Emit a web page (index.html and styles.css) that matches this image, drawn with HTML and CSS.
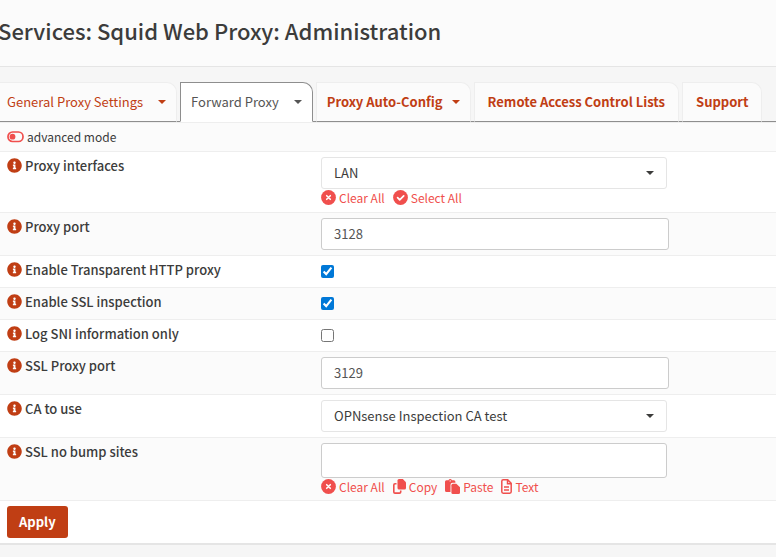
FILE: index.html
```
<!DOCTYPE html>
<html lang="en">
<head>
<meta charset="utf-8">
<meta name="viewport" content="width=device-width, initial-scale=1">
<title>Services: Squid Web Proxy: Administration</title>
<link rel="stylesheet" href="styles.css">
</head>
<body>
<svg class="sprite" aria-hidden="true">
  <symbol id="info" viewBox="0 0 512 512"><path d="M256 8C119.043 8 8 119.083 8 256c0 136.997 111.043 248 248 248s248-111.003 248-248C504 119.083 392.957 8 256 8zm0 110c23.196 0 42 18.804 42 42s-18.804 42-42 42-42-18.804-42-42 18.804-42 42-42zm56 254c0 6.627-5.373 12-12 12h-88c-6.627 0-12-5.373-12-12v-24c0-6.627 5.373-12 12-12h12v-64h-12c-6.627 0-12-5.373-12-12v-24c0-6.627 5.373-12 12-12h64c6.627 0 12 5.373 12 12v100h12c6.627 0 12 5.373 12 12v24z"/></symbol>
  <symbol id="clear" viewBox="0 0 15 15"><circle cx="7.5" cy="7.5" r="7.4"/><path d="M5.700 5.700l3.600 3.600M9.300 5.700L5.700 9.300" fill="none" stroke="#fff" stroke-width="1.600" stroke-linecap="round"/></symbol>
  <symbol id="check" viewBox="0 0 15 15"><circle cx="7.500" cy="7.500" r="7.400"/><path d="M4.600 7.700l2.100 2.100 4-4" fill="none" stroke="#fff" stroke-width="1.700" stroke-linecap="round" stroke-linejoin="round"/></symbol>
  <symbol id="copy" viewBox="0 0 13 15"><path d="M6 0H9.800L13 3.200V9q0 1.500-1.500 1.500H6Q4.500 10.500 4.500 9V1.500Q4.500 0 6 0z"/><path d="M3.500 4.700H2q-1.200 0-1.200 1.200v7q0 1.200 1.200 1.200h4.500q1.200 0 1.200-1.200V11.500" fill="none" stroke="currentColor" stroke-width="1.600"/></symbol>
  <symbol id="paste" viewBox="0 0 15 15"><path d="M1.500 1.200h2Q4 0 5.200 0t1.700 1.200h2q1.500 0 1.500 1.500v1.100H7.500Q5.500 3.800 5.500 5.800V13h-4Q0 13 0 11.500V2.700q0-1.500 1.500-1.500z"/><path d="M7.900 4.700h3.400L15 8.200v5.300q0 1.500-1.500 1.500H7.900q-1.500 0-1.500-1.500V6.200q0-1.500 1.500-1.500z"/><circle cx="5.200" cy="1.900" r=".7" fill="#fbfbfb"/></symbol>
  <symbol id="text" viewBox="0 0 11 15"><path d="M2.200.8h4.500l3.500 3.500v8.500q0 1.400-1.400 1.400H2.200Q.8 14.200.8 12.800V2.200Q.8.8 2.200.8zM6.500 1v3.700H10M3 8h5M3 11h5" fill="none" stroke="currentColor" stroke-width="1.500"/></symbol>
  <symbol id="toggle" viewBox="0 0 17 12"><rect x="1" y="1" width="15" height="9.500" rx="4.500" fill="none" stroke="currentColor" stroke-width="1.700"/><circle cx="5.500" cy="5.700" r="2.900"/></symbol>
</svg>

<header class="page-head"><h1>Services: Squid Web Proxy: Administration</h1></header>

<main>
  <nav class="tabs" aria-label="Proxy settings">
    <a class="tab" href="#general">General Proxy Settings<span class="caret"></span></a>
    <a class="tab active" href="#forward" aria-current="page">Forward Proxy<span class="caret"></span></a>
    <a class="tab strong" href="#pac">Proxy Auto-Config<span class="caret"></span></a>
    <a class="tab strong plain" href="#acl">Remote Access Control Lists</a>
    <a class="tab strong plain" href="#support">Support</a>
  </nav>

  <form class="settings">
    <div class="mode"><a href="#advanced" aria-label="Toggle advanced mode"><svg class="toggle"><use href="#toggle"/></svg></a><span>advanced mode</span></div>

    <div class="row">
      <label for="interfaces"><svg class="icon"><use href="#info"/></svg>Proxy interfaces</label>
      <div class="field">
        <select id="interfaces"><option>LAN</option></select>
        <div class="actions">
          <a href="#clear"><svg class="icon"><use href="#clear"/></svg>Clear All</a>
          <a href="#select"><svg class="icon"><use href="#check"/></svg>Select All</a>
        </div>
      </div>
    </div>
    <div class="row">
      <label for="port"><svg class="icon"><use href="#info"/></svg>Proxy port</label>
      <div class="field"><input class="text" id="port" type="text" value="3128"></div>
    </div>
    <div class="row">
      <label for="transparent"><svg class="icon"><use href="#info"/></svg>Enable Transparent HTTP proxy</label>
      <div class="field"><input class="check" id="transparent" type="checkbox" checked></div>
    </div>
    <div class="row">
      <label for="ssl"><svg class="icon"><use href="#info"/></svg>Enable SSL inspection</label>
      <div class="field"><input class="check" id="ssl" type="checkbox" checked></div>
    </div>
    <div class="row">
      <label for="sni"><svg class="icon"><use href="#info"/></svg>Log SNI information only</label>
      <div class="field"><input class="check" id="sni" type="checkbox"></div>
    </div>
    <div class="row">
      <label for="sslport"><svg class="icon"><use href="#info"/></svg>SSL Proxy port</label>
      <div class="field"><input class="text" id="sslport" type="text" value="3129"></div>
    </div>
    <div class="row">
      <label for="ca"><svg class="icon"><use href="#info"/></svg>CA to use</label>
      <div class="field"><select id="ca"><option>OPNsense Inspection CA test</option></select></div>
    </div>
    <div class="row">
      <label for="nobump"><svg class="icon"><use href="#info"/></svg>SSL no bump sites</label>
      <div class="field">
        <input class="text tokens" id="nobump" type="text">
        <div class="actions">
          <a href="#clear"><svg class="icon"><use href="#clear"/></svg>Clear All</a>
          <a href="#copy"><svg class="icon copy"><use href="#copy"/></svg>Copy</a>
          <a href="#paste"><svg class="icon"><use href="#paste"/></svg>Paste</a>
          <a href="#text"><svg class="icon file"><use href="#text"/></svg>Text</a>
        </div>
      </div>
    </div>
    <div class="row submit"><button type="button">Apply</button></div>
  </form>
</main>
</body>
</html>
```
FILE: styles.css
```
* {
  box-sizing: border-box;
}

body {
  margin: 0;
  overflow-x: hidden;
  background: #f6f6f6;
  color: #3c3c3b;
  font: 13px/20px "Noto Sans CJK SC", "Noto Sans", sans-serif;
}

.sprite {
  display: none;
}

a {
  color: #f04f4d;
  text-decoration: none;
}

svg {
  flex: none;
  fill: currentColor;
}

.page-head {
  padding: 13px 0 19px;
  border-bottom: 1px solid #e5e5e5;
  background: #fbfbfb;
}

h1 {
  margin: 0 0 0 -2px;
  font-size: 22px;
  font-weight: 500;
  line-height: 34px;
}

.tabs {
  display: flex;
  gap: 3px;
  margin-left: -4px;
  padding-top: 15px;
  border-bottom: 1px solid #8e8e8e;
}

.tab {
  display: flex;
  align-items: center;
  height: 40px;
  margin-bottom: -1px;
  padding: 0 10px;
  border: 1px solid #eee;
  border-bottom-color: #8e8e8e;
  border-radius: 0 10px 0 0;
  background: #fbfbfb;
  color: #c03e14;
  white-space: nowrap;
}

.tab.active {
  border-color: #8e8e8e;
  border-bottom-color: #fff;
  background: #fff;
  color: #555;
}

.tab.strong {
  font-weight: 700;
}

.tab.plain {
  padding: 0 13px;
}

.caret {
  margin-left: 15px;
  border: 4px solid transparent;
  border-top-color: currentColor;
  border-bottom: 0;
}

.strong .caret {
  margin-left: 9px;
}

.settings {
  border-top: 1px solid #eee;
  border-bottom: 2px solid #e5e5e5;
}

.mode {
  display: flex;
  align-items: center;
  gap: 3px;
  height: 28px;
  padding: 0 7px;
  background: #fbfbfb;
  font-size: 12px;
}

.mode a {
  display: flex;
}

.toggle {
  width: 17px;
  height: 12px;
  margin-bottom: 1px;
}

.row {
  display: grid;
  grid-template-columns: 314px minmax(0, 348px);
  padding: 5px 7px;
  border-top: 1px solid #eee;
  background: #fff;
}

.row:nth-child(odd) {
  background: #fbfbfb;
}

.row.submit {
  display: block;
  background: #fff;
}

.row label {
  display: flex;
  align-items: center;
  align-self: start;
  gap: 3px;
  height: 18px;
  font-weight: 500;
}

.icon {
  width: 15px;
  height: 15px;
  margin-bottom: 1px;
}

label .icon {
  margin-bottom: 2px;
  color: #c03e14;
}

.icon.copy {
  width: 13px;
}

.icon.file {
  width: 11px;
}

select,
.text {
  display: block;
  width: 100%;
  height: 32px;
  padding: 0 12px;
  border: 1px solid #ccc;
  border-radius: 3px;
  background: #fff;
  color: #555;
  font: inherit;
}

.text {
  padding-bottom: 2px;
}

select,
.tokens {
  max-width: 346px;
}

select {
  appearance: none;
  border-color: #e5e5e5;
  background: #fff url("data:image/svg+xml,%3Csvg xmlns='http://www.w3.org/2000/svg' width='8' height='4'%3E%3Cpath d='M0 0h8L4 4z' fill='%233c3c3b'/%3E%3C/svg%3E") no-repeat right 12px center;
  color: #3c3c3b;
}

.tokens {
  height: 35px;
}

.check {
  display: block;
  width: 13px;
  height: 13px;
  margin: 4px 0;
  accent-color: #0078d7;
}

.actions {
  display: flex;
  gap: 8px;
  height: 17px;
  font-size: 12px;
  line-height: 17px;
}

select + .actions {
  margin-bottom: 1px;
}

.actions a {
  display: flex;
  align-items: center;
  gap: 3px;
}

button {
  display: block;
  height: 32px;
  padding: 0 12px;
  border: 0;
  border-radius: 3px;
  background: #c03e14;
  color: #fff;
  font: inherit;
  font-weight: 700;
}
```
